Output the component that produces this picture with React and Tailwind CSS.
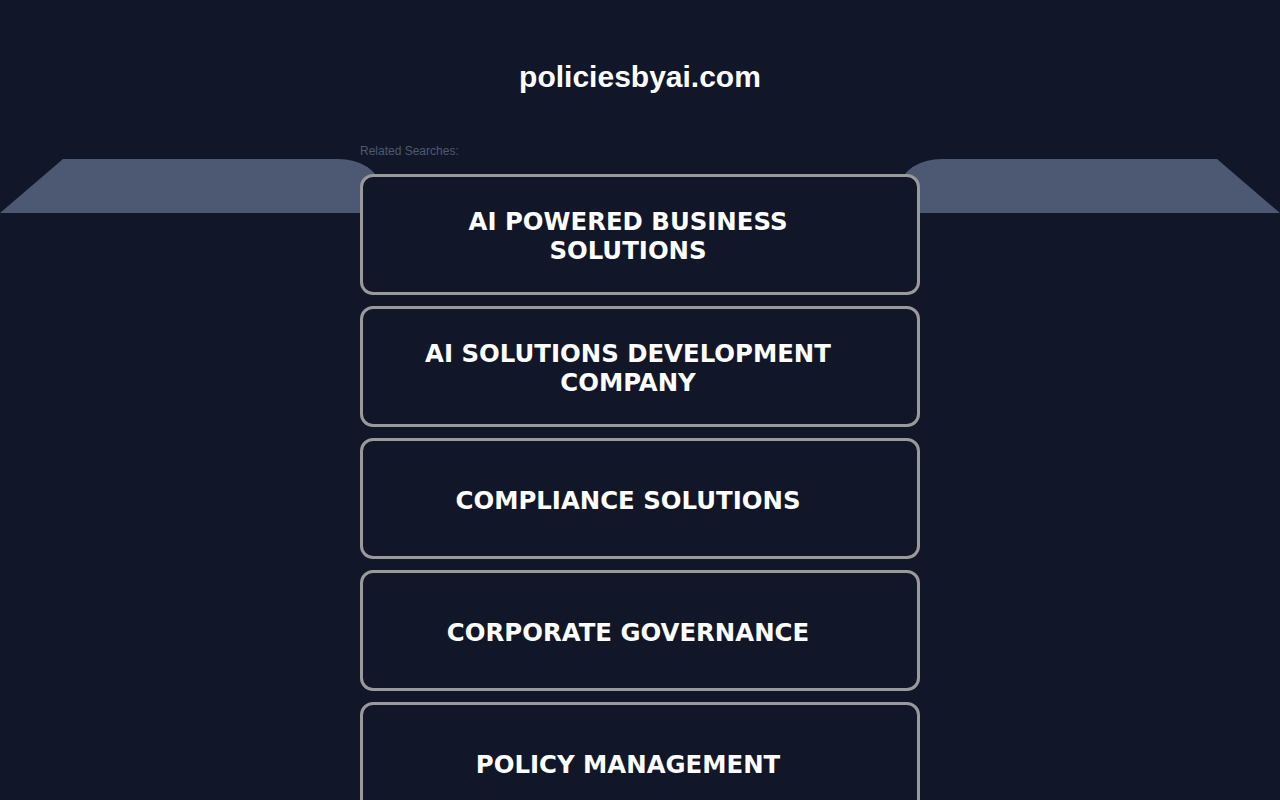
import React from "react";

const searches = [
  "AI POWERED BUSINESS SOLUTIONS",
  "AI SOLUTIONS DEVELOPMENT COMPANY",
  "COMPLIANCE SOLUTIONS",
  "CORPORATE GOVERNANCE",
  "POLICY MANAGEMENT",
];

function Band() {
  return (
    <svg
      className="absolute left-0 top-[159px] pointer-events-none"
      width="1280"
      height="54"
      viewBox="0 0 1280 54"
    >
      <path d="M0 54 L63 0 L338 0 Q372 0 384 30 L384 54 Z" fill="#4d5873" />
      <path d="M1280 54 L1217 0 L942 0 Q908 0 896 30 L896 54 Z" fill="#4d5873" />
    </svg>
  );
}

export default function App() {
  return (
    <div
      className="relative min-h-screen bg-[#111729] overflow-hidden"
      style={{ fontFamily: "'Liberation Sans', Arial, sans-serif" }}
    >
      <Band />
      <div className="relative w-[560px] mx-auto">
        <h1 className="pt-[59px] h-[138px] text-center text-[30px] font-bold text-white leading-[36px]">
          policiesbyai.com
        </h1>
        <div className="text-[12px] text-[#4f5a70] leading-[14px] pt-[6px] h-[36px]">
          Related Searches:
        </div>
        <div className="flex flex-col gap-[11px]">
          {searches.map((s) => (
            <a
              key={s}
              href="#"
              className="h-[121px] border-[3px] border-[#9a9a9a] rounded-[13px] bg-[#111729] flex items-center justify-center pl-[45px] pr-[69px] pt-[3px]"
            >
              <span
                className="text-white font-bold text-[24.4px] leading-[29px] text-center"
                style={{ fontFamily: "'DejaVu Sans', Verdana, sans-serif" }}
              >
                {s}
              </span>
            </a>
          ))}
        </div>
      </div>
    </div>
  );
}
